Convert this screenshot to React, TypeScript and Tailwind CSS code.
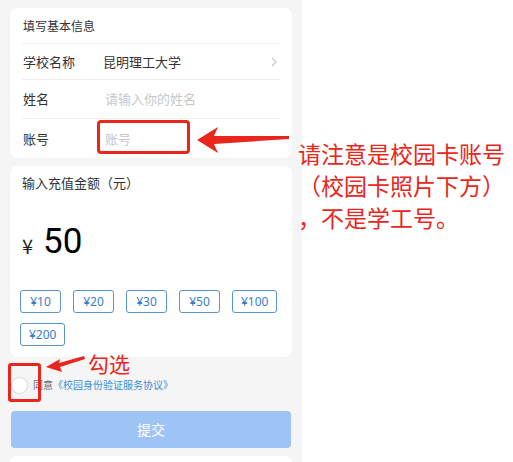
import React from "react";

const amounts = ["¥10", "¥20", "¥30", "¥50", "¥100", "¥200"];

export default function App() {
  return (
    <div
      className="relative flex w-[513px] h-[462px] overflow-hidden bg-white"
      style={{ fontFamily: '"Noto Sans CJK SC", "Noto Sans", sans-serif' }}
    >
      <div className="w-[302px] h-full bg-[#f5f5f5] pt-[8px] px-[10px] flex flex-col">
        {/* card 1 */}
        <div className="bg-white rounded-[8px] px-[12px]">
          <div className="h-[35px] flex items-center text-[12px] text-[#333] pl-[1px]">填写基本信息</div>
          <div className="h-px bg-[#f0f0f0]" />
          <div className="h-[35px] flex items-center text-[13px] text-[#333]">
            <span className="w-[81px] pl-[1px]">学校名称</span>
            <span className="flex-1">昆明理工大学</span>
            <svg width="8" height="12" viewBox="0 0 8 12" className="mr-[2px]">
              <path d="M2 2 L6 6 L2 10" fill="none" stroke="#c8c8c8" strokeWidth="1.2" />
            </svg>
          </div>
          <div className="h-px bg-[#f0f0f0]" />
          <div className="h-[38px] flex items-center text-[13px]">
            <span className="w-[83px] pl-[1px] text-[#333]">姓名</span>
            <span className="text-[#c8c8c8]">请输入你的姓名</span>
          </div>
          <div className="h-px bg-[#f0f0f0]" />
          <div className="h-[39px] flex items-center text-[13px]">
            <span className="w-[83px] pl-[1px] text-[#333]">账号</span>
            <span className="text-[#c8c8c8]">账号</span>
          </div>
        </div>

        {/* card 2 */}
        <div className="mt-[8px] bg-white rounded-[8px] pl-[10px] pr-[9px] pt-[8px] pb-[11px]">
          <div className="text-[13px] text-[#333] leading-[18px] pl-[2px]">输入充值金额（元）</div>
          <div className="mt-[34px] h-[32px] flex items-end pl-[2px]">
            <span className="text-[20px] leading-[20px] text-[#222] mb-[2px]">¥</span>
            <span
              className="ml-[10px] text-[35px] leading-[32px] text-black"
              style={{ fontFamily: "Roboto, sans-serif" }}
            >
              50
            </span>
          </div>
          <div className="mt-[32px] flex flex-wrap gap-x-[12px] gap-y-[10px]">
            {amounts.map((a) => (
              <div
                key={a}
                className="h-[23px] px-[8px] min-w-[41px] flex items-center justify-center border border-[#5b93cf] rounded-[3px] text-[12px] text-[#3b7dc4]"
                style={{ fontFamily: '"Noto Sans", sans-serif' }}
              >
                {a}
              </div>
            ))}
          </div>
        </div>

        {/* agree */}
        <div className="mt-[19px] h-[18px] flex items-center">
          <div className="w-[17px] h-[17px] rounded-full border border-[#d8d8d8] bg-white ml-[1px]" />
          <span className="ml-[5px] text-[10px] leading-[12px] text-[#666]">同意</span>
          <span className="text-[10px] leading-[12px] text-[#3b8fd6]">《校园身份验证服务协议》</span>
        </div>

        {/* submit */}
        <div className="mt-[17px] mx-[1px] h-[37px] rounded-[4px] bg-[#9ec4f6] flex items-center justify-center text-[14px] text-white">
          提交
        </div>

        <div className="mt-[8px] flex-1 bg-white rounded-t-[8px]" />
      </div>

      {/* annotations */}
      <div className="absolute left-[97px] top-[120px] w-[93px] h-[34px] border-[3px] border-[#e8261c] rounded-[4px]" />
      <div className="absolute left-[8px] top-[363px] w-[33px] h-[39px] border-[3px] border-[#e8261c] rounded-[3px]" />
      <svg className="absolute left-0 top-0" width="513" height="462" viewBox="0 0 513 462">
        <polygon
          points="197,140 218,127 214,136 289,136 289,139 214,144 218,153"
          fill="#e8261c"
        />
        <polygon points="46,367 60,359 59,363 84,356 85,359 60,367 62,372" fill="#e8261c" />
      </svg>
      <div className="absolute left-[298px] top-[137px] text-[23px] leading-[32px] text-[#e8261c]">
        <div>请注意是校园卡账号</div>
        <div>（校园卡照片下方）</div>
        <div>，不是学工号。</div>
      </div>
      <div className="absolute left-[88px] top-[352px] text-[21px] leading-[22px] text-[#e8261c]">勾选</div>
    </div>
  );
}
